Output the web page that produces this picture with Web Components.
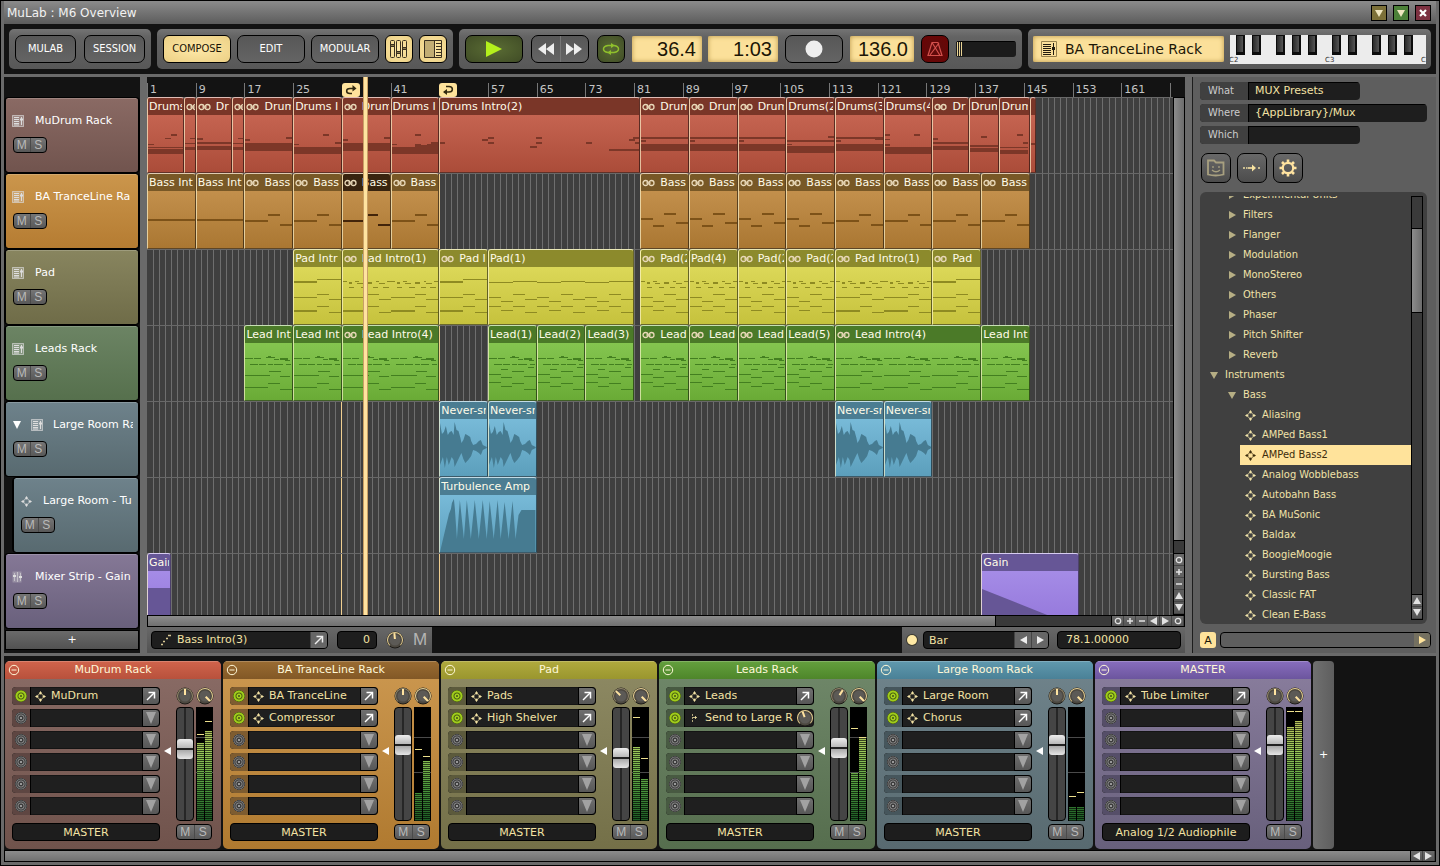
<!DOCTYPE html>
<html lang="en">
<head>
<meta charset="utf-8">
<title>MuLab : M6 Overview</title>
<style>
  html, body { margin: 0; height: 100%; background: #000; }
  body { font: 11px/18px "DejaVu Sans", "Liberation Sans", sans-serif; color: #fff; }
</style>
</head>
<body>
<mu-app></mu-app>

<script>
const BASE = `
  *, *::before, *::after { box-sizing: border-box; }
  button, input, select { font: inherit; color: inherit; margin: 0; padding: 0; border: 0; background: none; outline: 0; min-width: 0; }
  button { display: grid; place-items: center; cursor: default; }
  svg { display: block; }
`;

/* Registers an element whose shadow tree is built from its attributes. */
function define(name, css, render) {
  customElements.define(name, class extends HTMLElement {
    connectedCallback() {
      if (this.shadowRoot) return;
      this.attachShadow({ mode: 'open' }).innerHTML =
        `<style>${BASE}${css}</style>${render(this)}`;
    }
  });
}

const svg = (w, h, body, extra = '') =>
  `<svg width="${w}" height="${h}" viewBox="0 0 ${w} ${h}" fill="none" stroke="none" aria-hidden="true" ${extra}>${body}</svg>`;

const ICONS = {
  rack: svg(12, 12, `<rect width="12" height="12" fill="currentColor" opacity=".3"/><path d="M.5.5h11v11H.5z" stroke="currentColor" opacity=".55"/><path d="M2 2.500h5M2 4.500h5M2 6.500h5M2 8.500h5M2 10h5M9.500 2v8" stroke="currentColor"/><path d="M8 3.500h3v2H8z" fill="currentColor"/>`),
  strip: svg(12, 12, `<path d="M.5.5h9v11h-9z" fill="currentColor" opacity=".3"/><path d="M2.500 2v8M5.500 1v10M8.500 2v8" stroke="currentColor" opacity=".6"/><path d="M1 4h3v2H1zM7 5h3v2H7z" fill="currentColor"/>`),
  node: svg(11, 11, `<circle cx="5.500" cy="5.500" r="2.800" stroke="currentColor" opacity=".6"/><path d="M5.500 0l1.600 2.200-1.600 1.300L3.900 2.200zM5.500 11l1.600-2.200-1.600-1.300-1.600 1.300zM0 5.500l2.200-1.600 1.300 1.600-1.300 1.600zM11 5.500L8.800 3.900 7.500 5.500l1.300 1.600z" fill="currentColor"/>`),
  send: svg(11, 11, `<path d="M3.500 1v9" stroke="currentColor" stroke-dasharray="2 1" opacity=".7"/><path d="M4 4.500h4M6.500 3v3" stroke="currentColor" opacity=".8"/>`),
  link: svg(13, 8, `<ellipse cx="3.500" cy="4" rx="2.500" ry="2.500" stroke="currentColor" stroke-width="1.300"/><ellipse cx="9.500" cy="4" rx="2.500" ry="2.500" stroke="currentColor" stroke-width="1.300"/><path d="M4 4h5" stroke="currentColor"/>`),
  open: svg(10, 10, `<path d="M1 9l7-7" stroke="currentColor" stroke-width="1.500"/><path d="M2.500 1.500h6v6" stroke="currentColor" stroke-width="1.500"/>`),
  down: svg(10, 12, `<path d="M0 0h10L5 12z" fill="currentColor"/>`),
  downS: svg(8, 8, `<path d="M0 0h8L4 8z" fill="currentColor"/>`),
  triD: svg(8, 7, `<path d="M0 0h8L4 7z" fill="currentColor"/>`),
  triU: svg(8, 7, `<path d="M0 7h8L4 0z" fill="currentColor"/>`),
  triR: svg(7, 8, `<path d="M0 0l7 4-7 4z" fill="currentColor"/>`),
  triL: svg(7, 8, `<path d="M7 0L0 4l7 4z" fill="currentColor"/>`),
  ring: svg(8, 8, `<circle cx="4" cy="4" r="2.700" stroke="currentColor" stroke-width="1.300"/>`),
  plus: svg(8, 8, `<path d="M4 1v6M1 4h6" stroke="currentColor" stroke-width="1.500"/>`),
  minus: svg(8, 8, `<path d="M1 4h6" stroke="currentColor" stroke-width="1.500"/>`),
  close: svg(8, 8, `<path d="M1 1l6 6M7 1L1 7" stroke="currentColor" stroke-width="2.200"/>`),
  play: svg(16, 16, `<path d="M0 0l16 8-16 8z" fill="#b4f01c"/>`),
  rew: svg(16, 12, `<path d="M8 0L0 6l8 6zM16 0L8 6l8 6z" fill="#eee"/>`),
  ff: svg(16, 12, `<path d="M0 0l8 6-8 6zM8 0l8 6-8 6z" fill="#eee"/>`),
  loop: svg(18, 14, `<path d="M6 10.500C0 9.500 0 4.500 6 3.500h5M12 3.500c6 1 6 6 0 7H7" stroke="#8fc02c" stroke-width="1.500"/><path d="M9 1l4 2.500L9 6zM9 8l-4 2.500L9 13z" fill="#8fc02c"/>`),
  rec: svg(18, 18, `<circle cx="9" cy="9" r="8.500" fill="#eee"/>`),
  metro: svg(16, 16, `<path d="M5 1.500h6l4 13H1zM5 1.500l8 13M12 2L3 14" stroke="#d4504c" stroke-width="1.200"/>`),
  mixer: svg(18, 18, `<g stroke="#3a3020"><rect x=".5" y=".5" width="4" height="17" rx="1"/><rect x="6.500" y=".5" width="4" height="17" rx="1"/><rect x="12.500" y=".5" width="4" height="17" rx="1"/></g><g fill="#8a7a4c" stroke="#3a3020"><path d="M.5 4.500h4v2h-4zM6.500 11.500h4v2h-4zM12.500 7.500h4v2h-4z"/></g>`),
  panel: svg(18, 18, `<path d="M.5.5h17v17H.5z" stroke="#3a3020"/><path d="M1 1h9v16H1z" fill="#c2ad74"/><path d="M10.500 1v16M12 3.500h5M12 6.500h5M12 9.500h5M12 12.500h5M12 15.500h5" stroke="#3a3020"/>`),
  bigRack: svg(16, 16, `<path d="M.5.5h15v15H.5z" stroke="#96824f"/><path d="M2 3.500h8M2 5.500h8M2 7.500h8M2 9.500h8M2 11.500h8M2 13.500h8M12.500 2v12" stroke="#221c10"/><path d="M11 6h3v3h-3z" fill="#221c10"/>`),
  flagIn: svg(12, 10, `<path d="M7 8.500H5C.5 8.500.5 3.500 5 3.500h5" stroke="#32290f" stroke-width="1.500"/><path d="M7.500 0l4 3.500-4 3z" fill="#32290f"/>`),
  flagOut: svg(12, 10, `<path d="M4 1.500h3c4.500 0 4.500 5.500 0 5.500H2" stroke="#32290f" stroke-width="1.500"/><path d="M5 4L1 7l4 3z" fill="#32290f"/>`),
  folder: svg(20, 18, `<path d="M2 15.500V1.500h6l2 2h7.500v12q-8 2-15.500 0z" stroke="#a8a080" stroke-width="1.800"/><path d="M7 7v2M13 7v2M6 11q4 3.500 8 0" stroke="#a8a080" stroke-width="1.300"/>`),
  route: svg(18, 10, `<path d="M5 5h6" stroke="#f7e2a0" stroke-width="1.600"/><path d="M9 1.500L13 5 9 8.500z" fill="#f7e2a0"/><path d="M0 4h2v2H0zM3 4h1.500v2H3zM15 4h2v2h-2z" fill="#c8bc90"/>`),
  gear: svg(20, 20, `<circle cx="10" cy="10" r="5.200" stroke="#ffe3a0" stroke-width="2.200"/><path d="M10 1.500v3M10 15.500v3M1.500 10h3M15.500 10h3M4 4l2 2M14 14l2 2M4 16l2-2M14 6l2-2" stroke="#ffe3a0" stroke-width="2.600"/>`),
  steps: svg(12, 12, `<path d="M1 10.500h2M3 7.500h2M6 4.500h2M8 1.500h3" stroke="#d8c894" stroke-width="1.500"/>`),
  collapse: svg(12, 12, `<circle cx="6" cy="6" r="4.700" stroke="currentColor"/><path d="M3.500 6h5" stroke="currentColor"/>`)
};

/* ---------- small controls ---------- */

define('mu-icon', `:host { display: grid; place-items: center; flex: none; }`,
  el => ICONS[el.getAttribute('name')]);

define('mu-button', `
  :host { display: block; flex: none; height: 28px; font-family: "DejaVu Sans Condensed", "DejaVu Sans", sans-serif; }
  button { width: 100%; height: 100%; border: 1px solid #000; border-radius: 7px; background: linear-gradient(#575757, #646464); }
  :host([tone=lit]) button { color: #1a1406; background: radial-gradient(#ffe9a8, #ebcf84); border-radius: 6px; }
  :host([tone=green]) button { background: radial-gradient(#5a6c34, #404c26); }
  :host([tone=red]) button { background: radial-gradient(#5c0c0c, #6c0404); }
`, el => `<button type="button" aria-label="${el.getAttribute('label') || el.textContent}"><slot></slot></button>`);

define('mu-group', `
  :host { display: flex; align-items: center; height: 40px; padding: 0 6px; border-radius: 5px; flex: none;
    background: linear-gradient(#747474, #636363 20%, #585858); }
`, () => `<slot></slot>`);

define('mu-lcd', `
  :host { display: block; flex: none; height: 26px; border-radius: 2px; background: #fbe09a; box-shadow: inset 0 0 5px #b89446;
    font: 20px/26px "Liberation Sans", sans-serif; color: #1c1606; }
  input { display: block; width: 100%; height: 100%; text-align: right; padding-right: 6px; }
`, el => `<input type="text" aria-label="${el.getAttribute('label')}" value="${el.getAttribute('value')}">`);

define('mu-knob', `
  :host { display: grid; width: 18px; height: 18px; flex: none; }
  svg, input { grid-area: 1 / 1; }
  input { width: 18px; height: 18px; opacity: 0; }
`, el => {
  const v = +el.getAttribute('value'), a = (v - 50) * 2.7, ring = el.hasAttribute('ring');
  return svg(18, 18, `<circle cx="9" cy="9" r="8" fill="#4c4840" stroke="#1e1c18"/>
    <circle cx="9" cy="9" r="7.500" stroke="${ring ? '#e6cf92' : '#8f8468'}" stroke-dasharray="35 13" transform="rotate(135 9 9)"/>
    <circle cx="9" cy="9" r="5.500" fill="#5c5a56"/>
    <path d="M9 2v6" stroke="#ffe3a0" stroke-width="2" transform="rotate(${a} 9 9)"/>`) +
    `<input type="range" min="0" max="100" value="${v}" aria-label="${el.getAttribute('label')}">`;
});

define('mu-mutesolo', `
  :host { display: flex; width: 34px; height: 16px; border: 1px solid #000; border-radius: 4px; overflow: hidden; flex: none;
    background: linear-gradient(#757575, #585858); font: 12px/14px "Liberation Sans", sans-serif; color: #b9b9b9; }
  button { flex: 1; } button + button { border-left: 1px solid #4a4a4a; }
`, () => `<button type="button" aria-label="Mute">M</button><button type="button" aria-label="Solo">S</button>`);

define('mu-scroll', `
  :host { display: flex; background: #000; gap: 1px; border: 1px solid #000; flex: none; }
  :host([dir=v]) { flex-direction: column; width: 12px; }
  :host([dir=h]) { height: 12px; }
  .track { background: #3a3a3a; flex-basis: 0; }
  .thumb { background: linear-gradient(90deg, #8c8c8c, #6c6c6c); flex-basis: 0; }
  :host([dir=h]) .thumb { background: linear-gradient(#8c8c8c, #707070); }
  .pad { display: flex; flex-direction: inherit; flex: none; background: linear-gradient(#6a6a6a, #555); color: #e2e2e2; }
  button { width: 12px; height: 100%; border-right: 1px solid #444; }
  :host([dir=v]) button { width: 100%; height: 12px; border: 0; border-bottom: 1px solid #444; }
`, el => {
  const [b, t, a] = el.getAttribute('parts').split(' ').map(Number);
  const btns = (el.getAttribute('buttons') || '').split(' ').filter(Boolean)
    .map(n => `<button type="button" aria-label="${n}">${ICONS[n]}</button>`).join('');
  return (b ? `<div class="track" style="flex-grow:${b}"></div>` : '') +
    `<div class="thumb" style="flex-grow:${t}"></div>` +
    (a ? `<div class="track" style="flex-grow:${a}"></div>` : '') +
    (btns ? `<div class="pad">${btns}</div>` : '');
});

/* ---------- title bar and toolbar ---------- */

define('mu-titlebar', `
  :host { display: flex; align-items: center; justify-content: space-between; height: 23px; padding: 1px 5px 0 3px;
    background: linear-gradient(#8b8b8b, #5c5c5c); font-size: 12px; color: #f2f2f2; }
  div { display: flex; gap: 6px; }
  button { width: 16px; height: 16px; border: 1px solid #000; color: #efe6c0; }
  .a { background: #7c7038; } .b { background: #4c8038; } .c { background: #7c3040; color: #fff; }
`, () => `<slot></slot><div>
  <button class="a" type="button" aria-label="Minimise">${ICONS.triD}</button>
  <button class="b" type="button" aria-label="Restore">${ICONS.triD}</button>
  <button class="c" type="button" aria-label="Close">${ICONS.close}</button></div>`);

define('mu-piano', `:host { display: block; width: 196px; height: 29px; flex: none; }`, () => {
  let w = '', b = '';
  for (let o = 0; o < 2; o++) {
    for (const x of [10, 26, 38, 50, 66, 82, 94]) w += `<path d="M${x + o * 96}.5v28.500" stroke="#9a9a9a" transform="translate(.5)"/>`;
    for (const x of [6, 22, 46, 62, 78]) b += `<rect x="${x + o * 96}" y="0" width="9" height="20" fill="#0c0c0c"/><rect x="${x + o * 96 + 1}" y="1" width="6" height="16" fill="url(#k)"/>`;
  }
  return svg(196, 29, `<defs><linearGradient id="k"><stop stop-color="#2a2a2a"/><stop offset="1" stop-color="#555"/></linearGradient></defs>
    <rect width="196" height="29" fill="#ececec"/>${w}${b}
    <g fill="#333" font-size="7" font-family="DejaVu Sans"><text x="-1" y="27">C2</text><text x="95" y="27">C3</text><text x="191" y="27">C</text></g>`);
});

define('mu-toolbar', `
  :host { display: flex; height: 50px; padding: 5px 5px 0; background: #131313; }
  .display { display: flex; align-items: center; gap: 8px; flex: 1; height: 26px; padding-left: 8px; margin-right: 6px; border-radius: 2px;
    background: #fbe09a; box-shadow: inset 0 0 5px #b89446; color: #1c1606; font-size: 14px; white-space: nowrap; }
  mu-group { gap: 6px; margin-right: 6px; }
  .a { gap: 8px; } .t { gap: 7px; }
  .last { flex: 1; margin: 0; padding: 0 5px; gap: 0; }
  .w61 { width: 61px; } .w68 { width: 68px; } .w28 { width: 28px; } .w58 { width: 58px; }
  .pair { display: flex; width: 58px; height: 28px; margin: 0 1px; border: 1px solid #000; border-radius: 7px; background: linear-gradient(#575757, #646464); }
  .pair button { flex: 1; } .pair button + button { border-left: 1px solid #777; }
  .tempo { width: 64px; } .clocks { display: flex; gap: 6px; } .clocks mu-lcd { width: 70px; }
  .vol { appearance: none; width: 60px; height: 16px; border-radius: 3px; background: #1b1b1b; box-shadow: inset 1px 1px #000; align-self: center; }
  .vol::-webkit-slider-thumb { appearance: none; width: 6px; height: 14px; background: repeating-linear-gradient(90deg, #1b1b1b 0 1px, #e9d394 1px 2px); }
`, () => `
  <mu-group class="a">
    <mu-button class="w61">MULAB</mu-button><mu-button class="w61">SESSION</mu-button>
  </mu-group>
  <mu-group>
    <mu-button class="w68" tone="lit">COMPOSE</mu-button><mu-button class="w68">EDIT</mu-button><mu-button class="w68">MODULAR</mu-button>
    <mu-button class="w28" tone="lit" label="Mixer"><mu-icon name="mixer"></mu-icon></mu-button>
    <mu-button class="w28" tone="lit" label="Browser"><mu-icon name="panel"></mu-icon></mu-button>
  </mu-group>
  <mu-group class="t">
    <mu-button class="w58" tone="green" label="Play"><mu-icon name="play"></mu-icon></mu-button>
    <div class="pair"><button type="button" aria-label="Rewind">${ICONS.rew}</button><button type="button" aria-label="Forward">${ICONS.ff}</button></div>
    <mu-button class="w28" tone="green" label="Loop"><mu-icon name="loop"></mu-icon></mu-button>
    <div class="clocks"><mu-lcd label="Position" value="36.4"></mu-lcd><mu-lcd label="Time" value="1:03"></mu-lcd></div>
    <mu-button class="w58" label="Record"><mu-icon name="rec"></mu-icon></mu-button>
    <mu-lcd class="tempo" label="Tempo" value="136.0"></mu-lcd>
    <mu-button class="w28" tone="red" label="Metronome"><mu-icon name="metro"></mu-icon></mu-button>
    <input class="vol" type="range" min="0" max="100" value="0" aria-label="CPU">
  </mu-group>
  <mu-group class="last">
    <div class="display"><mu-icon name="bigRack"></mu-icon>BA TranceLine Rack</div>
    <mu-piano></mu-piano>
  </mu-group>`);

/* ---------- track headers ---------- */

const TRACKS = [
  ['MuDrum Rack', 'rack', '#8a6a64', '#71544e'],
  ['BA TranceLine Ra', 'rack', '#cb964c', '#b57c32'],
  ['Pad', 'rack', '#88855f', '#6f6c48'],
  ['Leads Rack', 'rack', '#6c8464', '#56704d'],
  ['Large Room Ra', 'rack', '#6e828b', '#586a70', 'fold'],
  ['Large Room - Tu', 'node', '#6e828b', '#586a70', 'child'],
  ['Mixer Strip - Gain', 'strip', '#857896', '#69607c']
];

define('mu-track', `
  :host { display: flex; flex-direction: column; gap: 7px; height: 74px; padding: 14px 5px 0 6px; border: 1px solid #000; border-width: 0 1px;
    border-radius: 3px; outline: 1px solid #000; background: linear-gradient(var(--a), var(--b)); box-shadow: inset 0 1px #ffffff30; }
  :host([kind=child]) { margin-left: 8px; }
  .name { display: flex; align-items: center; height: 18px; gap: 11px; overflow: hidden; white-space: nowrap; color: #fff; }
  .name span { flex: 1; min-width: 0; overflow: hidden; }
  mu-icon { color: #ddd; }
  .fold { width: 8px; flex: none; }
  :host([kind=fold]) .name { padding-left: 1px; gap: 10px; }
  :host([kind=child]) .name { padding-left: 1px; }
  mu-mutesolo { margin-left: 1px; }
`, el => `<div class="name">${el.getAttribute('kind') === 'fold' ? '<button class="fold" type="button" aria-label="Fold">' + ICONS.downS + '</button>' : ''}<mu-icon name="${el.getAttribute('icon')}"></mu-icon><span><slot></slot></span></div><mu-mutesolo></mu-mutesolo>`);

define('mu-tracks', `
  :host { display: flex; flex-direction: column; gap: 2px; width: 136px; padding: 21px 1px 0 1px; background: #131313; flex: none; }
  .add { height: 20px; border: 1px solid #000; background: linear-gradient(#6a6a6a, #525252); color: #fff; }
`, () => TRACKS.map(([n, i, a, b, k]) =>
  `<mu-track icon="${i}" kind="${k || ''}" style="--a:${a};--b:${b}">${n}</mu-track>`).join('') +
  `<button class="add" type="button" aria-label="Add track">+</button>`);

/* ---------- clips: notes are "x,y,w,h" with 6 units to a bar ---------- */

const shift = (s, n, w) => Array.from({ length: n }, (_, i) =>
  s.split(' ').map(r => { const p = r.split(','); p[0] = +p[0] + i * w; return p.join(','); }).join(' ')).join(' ');
const PAD_LOW = '0,30,24,1 24,27,12,1 36,32,12,1 0,43,24,2 24,39,12,1 36,45,12,1';
const PAD_WALK = '0,30,12,1 12,34,12,1 24,27,12,1 36,32,12,1 0,39,12,1 12,43,12,1 24,39,12,1 36,45,12,1';
const PAD_DASH = '0,14,4,1 6,15,3,2 12,14,4,1 14,16,6,1 24,15,5,2 33,14,3,1 36,16,6,1 44,14,4,1 6,20,5,1 18,20,6,1 30,20,5,1 40,20,6,1';
const LEAD_DASH = '0,15,8,1 9,15,7,1 22,14,9,1 30,16,5,1 36,15,8,2 24,13,3,1 41,17,5,1 5,21,8,1 14,21,8,1 24,21,5,1 30,21,9,1 42,21,5,1';
const NOTES = {
  d1: '0,34,36,5 0,32,36,1 0,29,6,1 24,19,6,2 18,23,6,1',
  d2: '6,23,6,1 0,28,12,1 0,32,12,3',
  d3: '0,23,6,2 0,27,36,2 0,31,36,4',
  d5: '0,28,48,8 0,24,5,2 42,22,6,2',
  d6: '0,32,48,7 30,19,6,2 42,27,6,2 0,29,5,1',
  d8: '0,32,48,7 0,29,5,1 24,19,6,2 24,29,6,3 30,30,6,2 36,29,5,3 40,27,8,5',
  d9: '0,27,5,2 42,24,6,2 48,22,6,2 48,27,6,2 90,31,7,2 96,22,6,2 96,27,6,2 145,27,6,2 168,34,30,2 188,24,6,2 192,22,6,2 194,27,4,2',
  d10: '0,22,48,2 0,29,48,7 0,25,5,2',
  d11: '0,25,48,2 0,31,48,7 42,21,6,2 0,29,5,1',
  d12: '0,22,48,2 0,29,48,7 0,25,5,2 40,24,8,1',
  d13: '0,32,48,7 0,19,5,2 0,24,5,1 0,29,5,2 30,19,6,2',
  d14: '0,27,36,2 0,31,36,4 0,23,5,2',
  d15: '0,30,30,2 0,33,30,4 12,21,6,2',
  d16: '0,32,30,1 0,35,30,4 18,19,6,2 24,27,6,2',
  d17: '0,28,6,2',
  b1: '0,28,48,2',
  b2: '0,29,24,2 24,23,12,2 36,33,12,2',
  b3: '0,27,12,2 12,34,12,2 24,22,12,2 36,31,12,2',
  p1: '0,14,24,2 24,12,24,1 ' + PAD_LOW,
  p2: shift(PAD_DASH + ' ' + PAD_LOW, 2, 48),
  p3: shift('0,15,24,1 24,14,24,1 ' + PAD_WALK, 3, 48),
  p4: PAD_DASH + ' ' + PAD_WALK,
  l1: LEAD_DASH + ' 0,32,26,1 25,28,12,1 36,33,10,1 0,44,24,1 24,40,12,1 36,46,12,1',
  l4: LEAD_DASH + ' 0,31,12,1 12,34,12,1 24,28,12,1 36,33,12,1 0,39,12,1 12,43,12,1 24,40,12,1 36,46,12,1 12,26,8,1 40,24,6,1'
};
NOTES.l2 = shift(NOTES.l1, 2, 48); NOTES.l3 = shift(NOTES.l1, 3, 48);

const SHAPES = {
  never: 'M0 4L2 15 4 13 6 7 8 16 10 13 12 12 14 16 15 3 17 11 19 12 21 19 22 24 24 21 26 15 28 16 31 18 32 22 34 26 37 25 40 22 42 21 44 26 48 28V29L44 31 42 36 40 34 37 32 34 31 32 37 29 41 26 44 24 40 22 34 20 38 18 42 15 48 14 41 12 38 9 46 7 38 5 49 3 38 0 46z',
  turb: 'M0 57L9 19 11 14 12 8 14 4 15 14 17 44 20 5 24 44 27 5 31 44 35 5 39 44 43 5 47 44 50 6 54 44 58 5 61 44 65 7 69 44 73 6 76 44 79 20 82 15H96V58H0z',
  gainA: 'M0 17H24V58H0z',
  gainB: 'M0 18L96 56V58H0z'
};

const COLORS = {
  drums: ['#7a3628', '#cd6b58', '#ab4c39', '#7c3728'],
  bass: ['#785826', '#ca9754', '#aa7732', '#7d5218'],
  pad: ['#8c8a2c', '#e2de60', '#c6c23d', '#8e8a22'],
  lead: ['#4b7a28', '#8ccd57', '#6aab36', '#437f20'],
  audio: ['#4b7d92', '#80c2e0', '#5c9fbc', '#467b91'],
  gain: ['#665696', '#aa92ea', '#9376da', '#665696']
};

define('mu-clip', `
  :host { display: block; grid-row: 1; min-width: 0; overflow: hidden; border: 1px solid #00000088; border-left-color: #fff8d0aa; border-top-color: #ffffffa0; border-radius: 3px 3px 0 0;
    background: linear-gradient(var(--c1), var(--c2)); }
  header { display: flex; align-items: center; height: 17px; padding: 0 1px; gap: 5px; background: var(--c0); color: #fffbe8; white-space: nowrap; overflow: hidden; }
  header mu-icon { color: #e8d8b8; }
  header span { flex: 1; min-width: 0; overflow: hidden; }
  svg { width: 100%; height: 58px; }
  :host([selected]) header { background: #38240f; }
`, el => {
  const kind = el.getAttribute('kind'), k = el.getAttribute('art'), w = (el.getAttribute('to') - el.getAttribute('from')) * 6;
  const ink = el.hasAttribute('selected') ? '#42240a' : COLORS[kind][3];
  const art = SHAPES[k] ? `<path d="${SHAPES[k]}" fill="${ink}"/>` :
    NOTES[k].split(' ').map(r => { const [x, y, a, h] = r.split(','); return `<rect x="${x}" y="${y}" width="${a}" height="${h}"/>`; }).join('');
  return `<header>${el.hasAttribute('link') ? '<mu-icon name="link"></mu-icon>' : ''}<span><slot></slot></span></header>
  <svg viewBox="0 0 ${w} 58" preserveAspectRatio="none" fill="${ink}" aria-hidden="true" ${SHAPES[k] ? '' : 'shape-rendering="crispEdges"'}>${art}</svg>`;
});

/* from, to, art, label; a leading * marks a linked clip, ! the selected one */
const LANES = [
  ['drums', [[1,7,'d1','Drums'],[7,9,'d2','*'],[9,15,'d3','*Dr'],[15,17,'d2','*'],[17,25,'d5','*Drum'],[25,33,'d6','Drums I'],[33,41,'d5','*Drum'],[41,49,'d8','Drums I'],[49,82,'d9','Drums Intro(2)'],
    [82,90,'d10','*Drum'],[90,98,'d10','*Drum'],[98,106,'d10','*Drum'],[106,114,'d11','Drums(2'],[114,122,'d12','Drums(3'],[122,130,'d13','Drums(4'],[130,136,'d14','*Dr'],[136,141,'d15','Drum'],[141,146,'d16','Drum'],[146,147,'d17','']]],
  ['bass', [[1,9,'b1','Bass Int'],[9,17,'b1','Bass Int'],[17,25,'b2','*Bass'],[25,33,'b2','*Bass'],[33,41,'b2','!Bass'],[41,49,'b2','*Bass'],
    [82,90,'b3','*Bass'],[90,98,'b3','*Bass'],[98,106,'b3','*Bass'],[106,114,'b3','*Bass'],[114,122,'b2','*Bass'],[122,130,'b2','*Bass'],[130,138,'b2','*Bass'],[138,146,'b2','*Bass']]],
  ['pad', [[25,33,'p1','Pad Intr'],[33,49,'p2','*Pad Intro(1)'],[49,57,'p1','*Pad I'],[57,81,'p3','Pad(1)'],[82,90,'p4','*Pad(2'],[90,98,'p4','Pad(4)'],[98,106,'p4','*Pad(2'],[106,114,'p4','*Pad(2'],[114,130,'p2','*Pad Intro(1)'],[130,138,'p1','*Pad']]],
  ['lead', [[17,25,'l1','Lead Int'],[25,33,'l1','Lead Int'],[33,49,'l2','*Lead Intro(4)'],[57,65,'l4','Lead(1)'],[65,73,'l4','Lead(2)'],[73,81,'l4','Lead(3)'],[82,90,'l4','*Lead'],[90,98,'l4','*Lead('],[98,106,'l4','*Lead('],[106,114,'l4','Lead(5)'],[114,138,'l3','*Lead Intro(4)'],[138,146,'l1','Lead Int']]],
  ['audio', [[49,57,'never','Never-sr'],[57,65,'never','Never-sr'],[114,122,'never','Never-sr'],[122,130,'never','Never-sr']]],
  ['audio', [[49,65,'turb','Turbulence Amp']]],
  ['gain', [[1,5,'gainA','Gain'],[138,154,'gainB','Gain']]]
];

define('mu-lane', `
  :host { display: grid; grid-template-columns: repeat(337, minmax(0, 1fr)); height: 76px; border-top: 1px solid #686868; flex: none; }
  ::slotted(*) { margin-top: -1px; }
`, () => `<slot></slot>`);

define('mu-ruler', `
  :host { display: grid; grid-template-columns: repeat(337, minmax(0, 1fr)); height: 20px; padding-top: 6px; background: #131313; overflow: hidden; }
  span { grid-row: 1; height: 14px; line-height: 14px; padding-left: 2px; border-left: 1px solid #777; color: #c4c4c4; white-space: nowrap; min-width: 0; overflow: hidden; }
  mu-icon { grid-row: 1; width: 18px; height: 14px; background: #ffe39b; border-radius: 3px; }
`, () => {
  let h = '';
  for (let b = 1; b <= 161; b += 8) {
    const c = (b - 1) * 2 + 1;
    h += b === 33 ? `<mu-icon name="flagIn" style="grid-column:${c} / span 16"></mu-icon>`
      : b === 49 ? `<mu-icon name="flagOut" style="grid-column:${c} / span 16"></mu-icon>`
      : `<span style="grid-column:${c} / span 16">${b}</span>`;
  }
  return h + `<span style="grid-column:337"></span>`;
});

define('mu-arranger', `
  :host { display: grid; grid-template: 20px minmax(0, 1fr) 12px 26px / minmax(0, 1fr) 12px; flex: 1; min-width: 0; background: #131313; position: relative; }
  .canvas { position: relative; overflow: hidden; background: #3f3f3f; }
  .lines { position: absolute; inset: 0; width: 100%; height: 100%; }
  .lanes { position: relative; display: flex; flex-direction: column; }
  .head { grid-area: 1 / 1 / 3 / 2; position: relative; pointer-events: none; }
  .head i { position: absolute; left: calc(35.5 / 168.5 * 100%); top: 0; bottom: 0; width: 5px; background: #ffe3a0; border: 1px solid #c9a066; border-width: 0 1px; }
  .ruler { grid-area: 1 / 1; } .canvas { grid-area: 2 / 1; }
  .vs { grid-area: 2 / 2; } .hs { grid-area: 3 / 1 / 4 / 3; } .info { grid-area: 4 / 1 / 5 / 3; }
  .info { display: flex; justify-content: space-between; }
  .info > div { display: flex; align-items: center; background: linear-gradient(#686868, #525252); height: 26px; padding: 0 4px; }
  .field { display: flex; align-items: center; height: 18px; border: 1px solid #000; border-radius: 4px; background: #1e1e1e; color: #f3e2a4; overflow: hidden; }
  .field input, .field select { appearance: none; flex: 1; height: 16px; }
  .field button { width: 17px; height: 16px; background: #666; border-left: 1px solid #444; color: #eee; }
  .big { font: 17px/18px "Liberation Sans", sans-serif; color: #b4b4b4; }
  .dot { appearance: none; width: 10px; height: 10px; border-radius: 50%; background: #ffe9a4; box-shadow: 0 0 0 1px #3c3a30; }
`, () => {
  let g = '';
  for (let b = 1; b <= 168; b++) {
    const x = (b / 168.5 * 100).toFixed(4), mark = b === 32 || b === 48;
    g += `<line x1="${x}%" x2="${x}%" y1="0" y2="100%" stroke="${mark ? '#f0cf90' : '#6e6e6e'}"/>`;
  }
  const lanes = LANES.map(([kind, clips]) => {
    const c = COLORS[kind];
    return `<mu-lane style="--c0:${c[0]};--c1:${c[1]};--c2:${c[2]}">` + clips.map(([a, z, art, t]) => {
      const sel = t[0] === '!', link = sel || t[0] === '*';
      return `<mu-clip kind="${kind}" from="${a}" to="${z}" art="${art}" ${link ? 'link' : ''} ${sel ? 'selected' : ''} style="grid-column:${a * 2 - 1} / ${z * 2 - 1}">${link ? t.slice(1) : t}</mu-clip>`;
    }).join('') + `</mu-lane>`;
  }).join('');
  return `<mu-ruler class="ruler"></mu-ruler>
  <div class="canvas"><svg class="lines" shape-rendering="crispEdges" aria-hidden="true">${g}</svg><div class="lanes">${lanes}</div></div>
  <div class="head"><i></i></div>
  <mu-scroll class="vs" dir="v" parts="0 444 12" buttons="ring plus minus triU triD"></mu-scroll>
  <mu-scroll class="hs" dir="h" parts="0 850 115" buttons="ring plus minus triL triR ring"></mu-scroll>
  <div class="info">
    <div style="gap:9px;padding-right:5px">
      <div class="field" style="width:177px;padding-left:8px;gap:5px">${ICONS.steps}<input type="text" aria-label="Clip name" value="Bass Intro(3)"><button type="button" aria-label="Open clip">${ICONS.open}</button></div>
      <div class="field" style="width:40px;padding-right:6px"><input type="text" aria-label="Transpose" value="0" style="text-align:right"></div>
      <mu-knob value="48" ring label="Clip level"></mu-knob><button type="button" class="big">M</button>
    </div>
    <div>
      <input class="dot" type="checkbox" checked aria-label="Snap" style="margin:0 6px 0 1px">
      <div class="field" style="width:126px;padding-left:5px"><select aria-label="Grid"><option>Bar</option></select><button type="button" aria-label="Previous">${ICONS.triL}</button><button type="button" aria-label="Next">${ICONS.triR}</button></div>
      <div class="field" style="width:124px;padding-left:8px;margin-left:8px"><input type="text" aria-label="Cursor" value="78.1.00000"></div>
    </div>
  </div>`;
});

/* ---------- browser ---------- */

define('mu-field', `
  :host { display: flex; height: 18px; border-radius: 4px; overflow: hidden; background: #1e1e1e; color: #f3e2a4; }
  label { width: 49px; padding-left: 8px; background: #404040; color: #ccc; border-right: 1px solid #000; font-family: "DejaVu Sans Condensed", "DejaVu Sans", sans-serif; flex: none; }
  input, select { appearance: none; flex: 1; height: 18px; padding-left: 6px; box-shadow: inset 0 1px #000; }
`, el => {
  const l = el.getAttribute('label'), v = el.getAttribute('value');
  return `<label for="f">${l}</label>` + (l === 'What' ? `<select id="f"><option>${v}</option></select>` : `<input id="f" type="text" value="${v}">`);
});

define('mu-item', `
  :host { display: flex; align-items: center; height: 20px; flex: none; color: #f0e2a8; white-space: nowrap; }
  :host([level="0"]) { padding-left: 10px; } :host([level="1"]) { padding-left: 28px; }
  :host([level="2"]) { margin-left: 40px; padding-left: 5px; gap: 6px; }
  :host([selected]) { background: #ffe39b; color: #3c2c0c; }
  mu-icon[name^=tri] { width: 8px; margin-right: 7px; color: #b6ae84; }
`, el => `<mu-icon name="${el.getAttribute('icon')}"></mu-icon><slot></slot>`);

define('mu-browser', `
  :host { display: flex; flex-direction: column; width: 244px; flex: none; padding: 5px 9px 5px 7px; background: #5e5e5e; border-left: 1px solid #1c1c1c; }
  .fields { display: grid; gap: 4px; } .short { width: 160px; }
  .tools { display: flex; gap: 6px; padding: 9px 1px; }
  .tools button { width: 30px; height: 30px; border: 1px solid #000; border-radius: 7px; background: linear-gradient(#686868, #4c4c4c); }
  .box { display: flex; flex: 1; min-height: 0; padding: 4px 4px 4px 0; border-radius: 6px; background: #404040; font-family: "DejaVu Sans Condensed", "DejaVu Sans", sans-serif; }
  .list { display: flex; flex-direction: column; justify-content: flex-start; flex: 1; overflow: hidden; }
  .list mu-item:first-child { margin-top: -11px; }
  .find { display: flex; gap: 4px; margin: 8px -4px 0 0; }
  .find > button { width: 16px; height: 16px; border-radius: 3px; background: #ffe39b; color: #1c1606; }
  .bar { display: flex; flex: 1; height: 16px; border: 1px solid #000; border-radius: 4px; overflow: hidden; }
  .bar input { flex: 1; } .bar button { width: 16px; background: #747060; color: #ffe39b; }
`, () => {
  const tri = ['Experimental Units', 'Filters', 'Flanger', 'Modulation', 'MonoStereo', 'Others', 'Phaser', 'Pitch Shifter', 'Reverb'];
  const leaf = ['Aliasing', 'AMPed Bass1', 'AMPed Bass2', 'Analog Wobblebass', 'Autobahn Bass', 'BA MuSonic', 'Baldax', 'BoogieMoogie', 'Bursting Bass', 'Classic FAT', 'Clean E-Bass'];
  return `<div class="fields">
    <mu-field class="short" label="What" value="MUX Presets"></mu-field>
    <mu-field label="Where" value="{AppLibrary}/Mux"></mu-field>
    <mu-field class="short" label="Which" value=""></mu-field></div>
  <div class="tools"><button type="button" aria-label="Folder">${ICONS.folder}</button><button type="button" aria-label="Route">${ICONS.route}</button><button type="button" aria-label="Settings">${ICONS.gear}</button></div>
  <div class="box"><div class="list">
    ${tri.map(t => `<mu-item level="1" icon="triR">${t}</mu-item>`).join('')}
    <mu-item level="0" icon="triD">Instruments</mu-item><mu-item level="1" icon="triD">Bass</mu-item>
    ${leaf.map(t => `<mu-item level="2" icon="node" ${t === 'AMPed Bass2' ? 'selected' : ''}>${t}</mu-item>`).join('')}
  </div><mu-scroll dir="v" parts="31 84 284" buttons="triU triD"></mu-scroll></div>
  <div class="find"><button type="button" aria-label="Auto">A</button><div class="bar"><input type="text" aria-label="Preview"><button type="button" aria-label="Preview play">${ICONS.triR}</button></div></div>`;
});

/* ---------- mixer ---------- */

define('mu-slot', `
  :host { display: flex; height: 18px; border-radius: 4px; overflow: hidden; background: #1f1f1f; color: #f3e2a4; box-shadow: inset 0 0 0 1px #0005; }
  input { appearance: none; width: 18px; height: 18px; flex: none; background: radial-gradient(circle, #999 0 1px, #3a3a3a 1px 2px, #888 3px, #3a3a3a 4px, #777 5px, #2a2a2a 6px, #00000000 6px), var(--dim); }
  input:checked { background: radial-gradient(circle, #58701a 0 1px, #a8d41c 1px 2px, #4a6010 3px, #a0cc1c 4px 5px, #3a4c10 6px, #00000000 6px), var(--dim); }
  div { display: flex; align-items: center; gap: 5px; flex: 1; min-width: 0; padding: 0 2px 0 4px; border-left: 1px solid #000; white-space: nowrap; overflow: hidden; }
  span { overflow: hidden; min-width: 0; }
  button { width: 18px; height: 18px; flex: none; border: 1px solid #000; border-radius: 0 4px 4px 0; background: linear-gradient(#6f6f6f, #575757); color: #fff; }
  .empty { color: #a2a2a2; }
`, el => {
  const t = el.textContent, icon = el.getAttribute('icon');
  const end = icon === 'send' ? `<mu-knob value="42" ring label="Send level"></mu-knob>`
    : t ? `<button type="button" aria-label="Open ${t}">${ICONS.open}</button>`
    : `<button type="button" class="empty" aria-label="Choose module">${ICONS.down}</button>`;
  return `<input type="checkbox" aria-label="Power" ${t ? 'checked' : ''}><div>${t ? `<mu-icon name="${icon}"></mu-icon><span><slot></slot></span>` : ''}</div>${end}`;
});

define('mu-meter', `
  :host { display: grid; grid-template-columns: 1fr 1fr; gap: 1px; width: 17px; height: 114px; padding: 0 1px; background: linear-gradient(#4a4a4a, #4a4a4a) 0 30px / 100% 1px no-repeat, linear-gradient(#4a4a4a, #4a4a4a) 0 65px / 100% 1px no-repeat, #000; align-items: end; flex: none; }
  div { display: grid; height: 114px; align-content: end; position: relative; }
  i { height: var(--h); background: repeating-linear-gradient(#0000 0 1px, #000a 1px 2px), linear-gradient(#c4bc5c, #98c858 40%, #4c9a3c 70%, #1c5a24) bottom / 100% 114px; }
  b { position: absolute; left: 0; right: 0; bottom: var(--p); height: 1px; background: #ede08c; }
`, el => el.getAttribute('levels').split(' ').map(s => { const [h, p] = s.split('/');
  return `<div style="--h:${h}px;--p:${p}px"><i></i><b></b></div>`; }).join(''));

define('mu-strip', `
  :host { display: flex; flex-direction: column; width: 216px; height: 188px; border-radius: 5px; overflow: hidden; flex: none; background: linear-gradient(var(--b1), var(--b2)); }
  header { display: grid; grid-template-columns: 18px 1fr 18px; align-items: center; height: 19px; text-align: center; background: linear-gradient(var(--t1), var(--t2)); box-shadow: inset 0 1px #fff3; color: #fff8d8; white-space: nowrap; }
  .body { display: flex; gap: 4px; padding: 8px 7px; }
  .slots { display: grid; gap: 4px; width: 148px; }
  .out { height: 18px; margin-top: 4px; border-radius: 4px; background: #1d1d1d; color: #f3e2a4; border: 1px solid #000; }
  .mark { width: 8px; padding-top: 60px; color: #fff; }
  .side { display: grid; grid-template: 18px 114px 16px / 18px 18px; gap: 2px; align-content: start; }
  .side mu-mutesolo { grid-column: 1 / 3; width: 36px; margin-top: 1px; }
  .fader { appearance: none; writing-mode: vertical-lr; direction: rtl; width: 18px; height: 114px; border: 1px solid #000; border-radius: 4px; background: linear-gradient(90deg, #454545 7px, #262626 7px 9px, #454545 9px); }
  .fader::-webkit-slider-thumb { appearance: none; width: 16px; height: 20px; border-radius: 3px; background: linear-gradient(#ededed, #b8b8b8 46%, #222 46% 54%, #a8a8a8 54%, #e6e6e6); }
`, el => {
  const d = STRIPS[el.getAttribute('index')];
  const slots = Array.from({ length: 6 }, (_, i) => {
    const t = d.slots[i] || '';
    return `<mu-slot icon="${t.startsWith('Send') ? 'send' : 'node'}">${t}</mu-slot>`;
  }).join('');
  return `<header><button type="button" aria-label="Collapse">${ICONS.collapse}</button>${d.name}</header>
  <div class="body"><div class="slots">${slots}<button class="out" type="button">${d.out}</button></div>
  <div class="mark">${ICONS.triL}</div>
  <div class="side"><mu-knob value="${d.pan}" label="Pan"></mu-knob><mu-knob value="100" ring label="Width"></mu-knob>
  <input class="fader" type="range" min="0" max="92" value="${92 - d.fader}" aria-label="Level"><mu-meter levels="${d.meter}"></mu-meter><mu-mutesolo></mu-mutesolo></div></div>`;
});

const STRIPS = [
  { name: 'MuDrum Rack', slots: ['MuDrum'], out: 'MASTER', pan: 50, fader: 31, meter: '78/86 90/99', c: ['#d0644c', '#b8513c', '#8a6c66', '#70534c', '#5e4642'] },
  { name: 'BA TranceLine Rack', slots: ['BA TranceLine', 'Compressor'], out: 'MASTER', pan: 50, fader: 27, meter: '28/71 60/64', c: ['#9a6c32', '#825826', '#cc9850', '#b07a30', '#7e5c30'] },
  { name: 'Pad', slots: ['Pads', 'High Shelver'], out: 'MASTER', pan: 33, fader: 40, meter: '74/103 42/62', c: ['#b0aa3e', '#9a962e', '#8e8a64', '#747048', '#5c5a3c'] },
  { name: 'Leads Rack', slots: ['Leads', 'Send to Large R'], out: 'MASTER', pan: 62, fader: 30, meter: '48/92 84/83', c: ['#64a03e', '#4e862a', '#70886a', '#566e4e', '#485a42'] },
  { name: 'Large Room Rack', slots: ['Large Room', 'Chorus'], out: 'MASTER', pan: 50, fader: 27, meter: '14/24 14/28', c: ['#6099ae', '#4a8197', '#70848c', '#586a70', '#46565c'] },
  { name: 'MASTER', slots: ['Tube Limiter'], out: 'Analog 1/2 Audiophile', pan: 50, fader: 27, meter: '94/109 100/109', c: ['#886ebe', '#6c559e', '#8a7e9e', '#68607c', '#554e68'] }
];

define('mu-mixer', `
  :host { display: flex; gap: 2px; height: 194px; padding: 5px 1px 1px; background: #131313; }
  .add { width: 21px; height: 188px; border-radius: 4px; background: linear-gradient(90deg, #707070, #5e5e5e); }
`, () => STRIPS.map((d, i) => `<mu-strip index="${i}" style="--t1:${d.c[0]};--t2:${d.c[1]};--b1:${d.c[2]};--b2:${d.c[3]};--dim:${d.c[4]}"></mu-strip>`).join('') +
  `<button class="add" type="button" aria-label="Add strip">+</button>`);

/* ---------- window ---------- */

define('mu-app', `
  :host { display: flex; flex-direction: column; min-height: 100vh; height: 100%; border: 1px solid #000; padding: 0 3px 3px; background: #6a6a6a; box-sizing: border-box; overflow: hidden; }
  .main { display: flex; flex: 1; min-height: 0; margin: 3px 0; }
  .main mu-browser { margin-left: 7px; } .main mu-arranger { margin-left: 7px; }
`, () => `<mu-titlebar>MuLab : M6 Overview</mu-titlebar>
  <mu-toolbar></mu-toolbar>
  <div class="main"><mu-tracks></mu-tracks><mu-arranger></mu-arranger><mu-browser></mu-browser></div>
  <mu-mixer></mu-mixer>
  <mu-scroll dir="h" parts="0 100 0" buttons="triL triR"></mu-scroll>`);
</script>
</body>
</html>
